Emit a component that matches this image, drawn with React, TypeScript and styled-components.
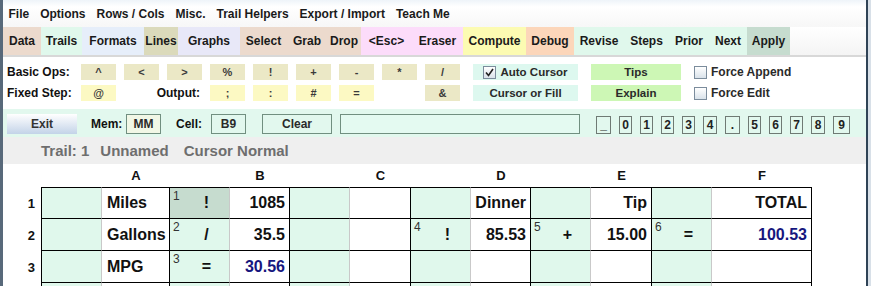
import { Fragment } from "react";
import styled, { createGlobalStyle } from "styled-components";

const GlobalStyle = createGlobalStyle`
  html, body {
    margin: 0;
    padding: 0;
    background: #d8e0e8;
    overflow: hidden;
  }
  body {
    font-family: "Liberation Sans", Arial, sans-serif;
    color: #111;
  }
`;

const Frame = styled.div`
  width: 868px;
  height: 286px;
  box-sizing: border-box;
  border-left: 3px solid #58697a;
  border-right: 2px solid #2f4356;
  background: #fff;
  overflow: hidden;
  display: flex;
  flex-direction: column;
  & > * {
    flex-shrink: 0;
  }
`;

const MenuBar = styled.div`
  height: 27px;
  display: flex;
  align-items: center;
  padding-left: 0;
  background: linear-gradient(#eef4f9, #ffffff 25%, #f7f7f7);
`;

const MenuItem = styled.span`
  padding: 0 5.5px;
  font-size: 12px;
  font-weight: 700;
  color: #1a1a1a;
`;

const TabBar = styled.div`
  height: 28px;
  display: flex;
  border-bottom: 2px solid #d8d8d8;
  background: linear-gradient(#ffffff, #f4f4f4);
`;

const Tab = styled.div<{ $w: number; $bg: string }>`
  width: ${(p) => p.$w}px;
  background: ${(p) => p.$bg};
  display: flex;
  align-items: center;
  justify-content: center;
  font-size: 12px;
  font-weight: 700;
  color: #1a1a1a;
`;

const Controls = styled.div`
  padding: 7px 0 8px 4px;
  display: flex;
  flex-direction: column;
  gap: 5px;
`;

const OpRow = styled.div`
  display: flex;
  gap: 8px;
  height: 16px;
`;

const RowLabel = styled.span<{ $w?: number; $right?: boolean }>`
  width: ${(p) => p.$w ?? 66}px;
  display: flex;
  align-items: center;
  justify-content: ${(p) => (p.$right ? "flex-end" : "flex-start")};
  padding-right: ${(p) => (p.$right ? 2 : 0)}px;
  box-sizing: border-box;
  font-size: 12px;
  font-weight: 700;
`;

const OpKey = styled.div<{ $tone?: "khaki" | "yellow" | "none" }>`
  width: 35px;
  display: flex;
  align-items: center;
  justify-content: center;
  font-size: 11px;
  font-weight: 700;
  color: #3a3a3a;
  background: ${(p) =>
    p.$tone === "yellow" ? "#fcf9c3" : p.$tone === "none" ? "transparent" : "#ebe8c6"};
`;

const WideKey = styled.div<{ $w: number; $bg: string; $lead?: number }>`
  width: ${(p) => p.$w}px;
  margin-left: ${(p) => p.$lead ?? 0}px;
  background: ${(p) => p.$bg};
  display: flex;
  align-items: center;
  justify-content: center;
  gap: 4px;
  font-size: 11.5px;
  font-weight: 700;
  color: #2a2a2a;
`;

const CheckLine = styled.label`
  margin-left: 5px;
  display: flex;
  align-items: center;
  gap: 4px;
  font-size: 12px;
  font-weight: 700;
  color: #2a2a2a;
`;

const Box = styled.span`
  width: 11px;
  height: 11px;
  border: 1px solid #7b8c9c;
  background: linear-gradient(#ffffff, #d9e2ea);
  display: inline-flex;
  align-items: center;
  justify-content: center;
`;

const Band = styled.div`
  height: 28px;
  box-sizing: border-box;
  padding: 5px 0 0 4px;
  display: flex;
  align-items: flex-start;
  background: #e2f8ee;
`;

const ExitButton = styled.div`
  width: 70px;
  height: 20px;
  display: flex;
  align-items: center;
  justify-content: center;
  background: linear-gradient(#ffffff, #c3d3e8);
  font-size: 12px;
  font-weight: 700;
  color: #333;
`;

const BandLabel = styled.span<{ $lead: number; $w: number }>`
  margin-left: ${(p) => p.$lead}px;
  width: ${(p) => p.$w}px;
  height: 20px;
  display: flex;
  align-items: center;
  font-size: 12px;
  font-weight: 700;
`;

const Field = styled.div<{ $lead: number; $w: number; $bg?: string }>`
  margin-left: ${(p) => p.$lead}px;
  width: ${(p) => p.$w}px;
  height: 20px;
  box-sizing: border-box;
  border: 1px solid #718f80;
  background: ${(p) => p.$bg ?? "#e2f8ee"};
  display: flex;
  align-items: center;
  justify-content: center;
  font-size: 12px;
  font-weight: 700;
  color: #2a2a2a;
`;

const Digits = styled.div`
  margin-left: 16px;
  margin-top: 2px;
  display: flex;
  gap: 8px;
`;

const Digit = styled.div<{ $w: number }>`
  width: ${(p) => p.$w}px;
  height: 18px;
  box-sizing: border-box;
  border: 1px solid #6f7a74;
  display: flex;
  align-items: center;
  justify-content: center;
  font-size: 12px;
  font-weight: 700;
  color: #222;
`;

const Status = styled.div`
  height: 27px;
  background: #efefef;
  padding-left: 38px;
  display: flex;
  align-items: center;
  font-size: 15px;
  font-weight: 700;
  color: #6e6e6e;
`;

const StatusPart = styled.span<{ $lead?: number }>`
  margin-left: ${(p) => p.$lead ?? 0}px;
`;

const Sheet = styled.div`
  display: grid;
  grid-template-columns: 38px 61px 68px 60px 60px 60px 61px 60px 60px 60px 61px 60px 100px;
  grid-template-rows: 23px 32px 32px 32px 32px;
`;

const ColHead = styled.div`
  display: flex;
  align-items: center;
  justify-content: center;
  font-size: 13px;
  font-weight: 700;
  color: #111;
`;

const RowHead = styled.div`
  display: flex;
  align-items: center;
  justify-content: flex-end;
  padding-right: 6px;
  font-size: 13px;
  font-weight: 700;
  color: #111;
`;

const OpCell = styled.div<{ $first?: boolean; $top?: boolean; $selected?: boolean }>`
  position: relative;
  box-sizing: border-box;
  border-bottom: 1px solid #000;
  border-right: 1px solid #c9c9c9;
  border-left: ${(p) => (p.$first ? "1px solid #000" : "none")};
  border-top: ${(p) => (p.$top ? "1px solid #000" : "none")};
  background: ${(p) => (p.$selected ? "#c6dccf" : "#e0f8ec")};
  display: flex;
  align-items: center;
  justify-content: center;
  padding-left: 14px;
  font-size: 16px;
  font-weight: 700;
  color: #111;
`;

const Step = styled.span`
  position: absolute;
  top: 1px;
  left: 3px;
  font-size: 12px;
  font-weight: 400;
  color: #333;
`;

const ValCell = styled.div<{ $top?: boolean; $left?: boolean; $blue?: boolean }>`
  box-sizing: border-box;
  border-bottom: 1px solid #000;
  border-right: 1px solid #000;
  border-top: ${(p) => (p.$top ? "1px solid #000" : "none")};
  background: #fff;
  display: flex;
  align-items: center;
  justify-content: ${(p) => (p.$left ? "flex-start" : "flex-end")};
  padding: 0 4px 0 5px;
  font-size: 16px;
  font-weight: 700;
  color: ${(p) => (p.$blue ? "#16167e" : "#111")};
  white-space: nowrap;
`;

const menus = ["File", "Options", "Rows / Cols", "Misc.", "Trail Helpers", "Export / Import", "Teach Me"];

const tabs: [string, number, string][] = [
  ["Data", 38, "#ecdacd"],
  ["Trails", 41, "#e0f8ec"],
  ["Formats", 62, "#e6eefa"],
  ["Lines", 34, "#dbdabb"],
  ["Graphs", 62, "#e8e8f8"],
  ["Select", 47, "#ecdacd"],
  ["Grab", 40, "#ecdacd"],
  ["Drop", 34, "#ecdacd"],
  ["<Esc>", 51, "#fcdcfa"],
  ["Eraser", 51, "#fcdcfa"],
  ["Compute", 63, "#fcfbb2"],
  ["Debug", 48, "#fcd6ba"],
  ["Revise", 50, "#e0f8ec"],
  ["Steps", 45, "#e0f8ec"],
  ["Prior", 40, "#e0f8ec"],
  ["Next", 38, "#e0f8ec"],
  ["Apply", 43, "#c6dccf"],
];

const basicOps = ["^", "<", ">", "%", "!", "+", "-", "*", "/"];

const digits: [string, number][] = [
  ["_", 15], ["0", 13], ["1", 13], ["2", 13], ["3", 13], ["4", 14], [".", 15],
  ["5", 13], ["6", 13], ["7", 13], ["8", 14], ["9", 17],
];

interface ICell {
  step?: string;
  op?: string;
  value?: string;
  left?: boolean;
  blue?: boolean;
  selected?: boolean;
}

const cols = ["A", "B", "C", "D", "E", "F"];

const rows: ICell[][] = [
  [
    { value: "Miles", left: true },
    { step: "1", op: "!", value: "1085", selected: true },
    {},
    { value: "Dinner" },
    { value: "Tip" },
    { value: "TOTAL" },
  ],
  [
    { value: "Gallons", left: true },
    { step: "2", op: "/", value: "35.5" },
    {},
    { step: "4", op: "!", value: "85.53" },
    { step: "5", op: "+", value: "15.00" },
    { step: "6", op: "=", value: "100.53", blue: true },
  ],
  [
    { value: "MPG", left: true },
    { step: "3", op: "=", value: "30.56", blue: true },
    {},
    {},
    {},
    {},
  ],
  [{}, {}, {}, {}, {}, {}],
];

function CheckMark() {
  return (
    <svg width="9" height="9" viewBox="0 0 9 9">
      <path d="M1 4.5 L3.5 7.5 L8 1" fill="none" stroke="#222" strokeWidth="1.6" />
    </svg>
  );
}

function App() {
  return (
    <Frame>
      <GlobalStyle />
      <MenuBar>
        {menus.map((m) => (
          <MenuItem key={m}>{m}</MenuItem>
        ))}
      </MenuBar>
      <TabBar>
        {tabs.map(([label, w, bg]) => (
          <Tab key={label} $w={w} $bg={bg}>
            {label}
          </Tab>
        ))}
      </TabBar>

      <Controls>
        <OpRow>
          <RowLabel>Basic Ops:</RowLabel>
          {basicOps.map((op) => (
            <OpKey key={op}>{op}</OpKey>
          ))}
          <WideKey $w={105} $bg="#ddf8ef" $lead={5}>
            <Box>
              <CheckMark />
            </Box>
            Auto Cursor
          </WideKey>
          <WideKey $w={90} $bg="#cdf7b5" $lead={5}>
            Tips
          </WideKey>
          <CheckLine>
            <Box />
            Force Append
          </CheckLine>
        </OpRow>
        <OpRow>
          <RowLabel>Fixed Step:</RowLabel>
          <OpKey $tone="yellow">@</OpKey>
          <RowLabel $w={78} $right>
            Output:
          </RowLabel>
          <OpKey $tone="yellow">;</OpKey>
          <OpKey $tone="yellow">:</OpKey>
          <OpKey $tone="yellow">#</OpKey>
          <OpKey $tone="yellow">=</OpKey>
          <OpKey $tone="none" />
          <OpKey>&amp;</OpKey>
          <WideKey $w={105} $bg="#ddf8ef" $lead={5}>
            Cursor or Fill
          </WideKey>
          <WideKey $w={90} $bg="#cdf7b5" $lead={5}>
            Explain
          </WideKey>
          <CheckLine>
            <Box />
            Force Edit
          </CheckLine>
        </OpRow>
      </Controls>

      <Band>
        <ExitButton>Exit</ExitButton>
        <BandLabel $lead={14} $w={30}>
          Mem:
        </BandLabel>
        <Field $lead={5} $w={35} $bg="#f1f7e6">
          MM
        </Field>
        <BandLabel $lead={15} $w={24}>
          Cell:
        </BandLabel>
        <Field $lead={11} $w={35}>
          B9
        </Field>
        <Field $lead={16} $w={70}>
          Clear
        </Field>
        <Field $lead={8} $w={240} $bg="#e4faf1" />
        <Digits>
          {digits.map(([d, w]) => (
            <Digit key={d} $w={w}>
              {d}
            </Digit>
          ))}
        </Digits>
      </Band>

      <Status>
        <StatusPart>Trail: 1</StatusPart>
        <StatusPart $lead={11}>Unnamed</StatusPart>
        <StatusPart $lead={15}>Cursor Normal</StatusPart>
      </Status>

      <Sheet>
        <div />
        {cols.map((c) => (
          <Fragment key={c}>
            <div />
            <ColHead>{c}</ColHead>
          </Fragment>
        ))}
        {rows.map((row, r) => (
          <Fragment key={"r" + r}>
            <RowHead>{r < 3 ? r + 1 : ""}</RowHead>
            {row.map((cell, c) => (
              <Fragment key={c}>
                <OpCell $first={c === 0} $top={r === 0} $selected={cell.selected}>
                  {cell.step && <Step>{cell.step}</Step>}
                  {cell.op}
                </OpCell>
                <ValCell $top={r === 0} $left={cell.left} $blue={cell.blue}>
                  {cell.value}
                </ValCell>
              </Fragment>
            ))}
          </Fragment>
        ))}
      </Sheet>
    </Frame>
  );
}

export default App;
